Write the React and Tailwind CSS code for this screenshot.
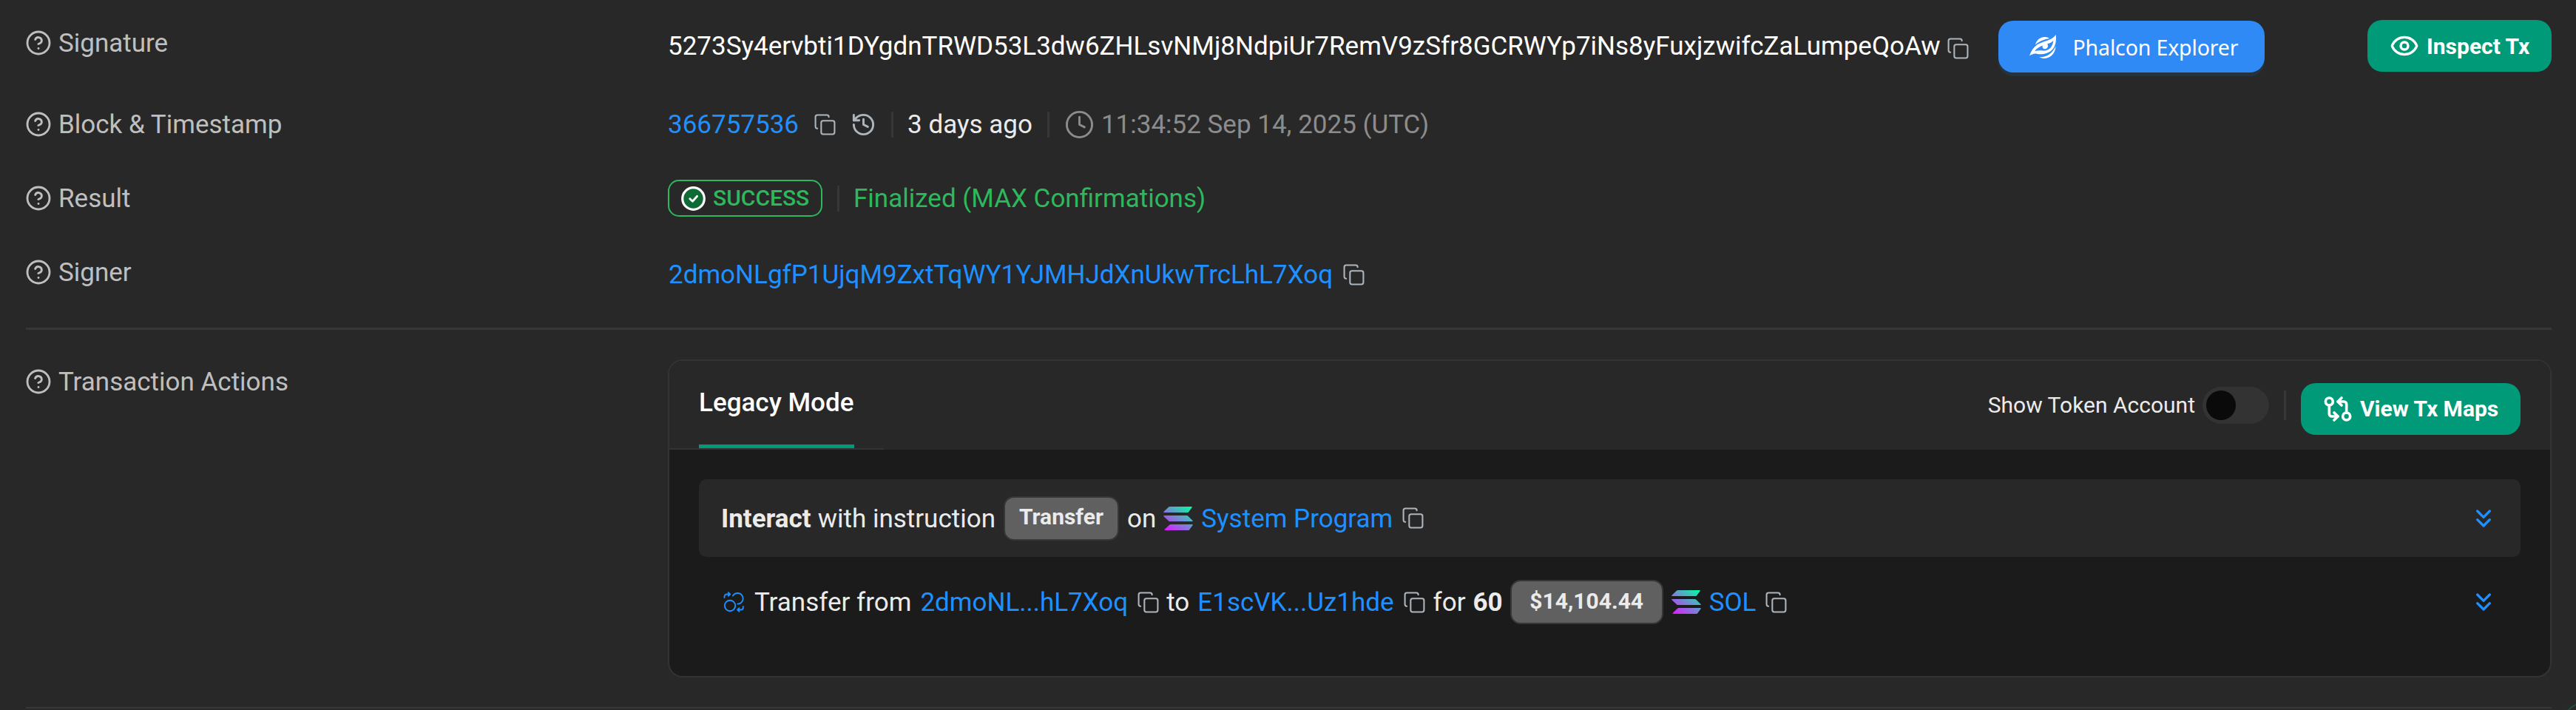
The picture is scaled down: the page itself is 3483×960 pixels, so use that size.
import { Copy, History, Clock, ChevronsDown, Eye, CircleHelp, GitCompareArrows } from "lucide-react";

const SIGNATURE =
  "5273Sy4ervbti1DYgdnTRWD53L3dw6ZHLsvNMj8NdpiUr7RemV9zSfr8GCRWYp7iNs8yFuxjzwifcZaLumpeQoAw";

function Label({ children, className = "" }) {
  return (
    <div className={"flex w-[868px] shrink-0 items-center gap-[9px] text-[#bfbfbf] " + className}>
      <CircleHelp className="-ml-[1px] size-[36px] shrink-0" strokeWidth={1.9} />
      <span className="pt-[2px]">{children}</span>
    </div>
  );
}

function CopyIcon({ className = "" }) {
  return <Copy className={"size-[31px] shrink-0 text-[#adb5bd] " + className} strokeWidth={1.6} />;
}

function Sep({ className = "" }) {
  return <div className={"w-[3px] shrink-0 bg-[#373737] " + className} />;
}

function Link({ children, className = "" }) {
  return <a className={"shrink-0 text-[#1e90ff] " + className}>{children}</a>;
}

function Pill({ children, className }) {
  return (
    <span
      className={
        "flex h-[60px] shrink-0 items-center justify-center rounded-[14px] border-2 border-[#373737] bg-[#606060] pb-[3px] text-[30px] font-bold " +
        className
      }
    >
      {children}
    </span>
  );
}

function SolIcon({ id, className = "" }) {
  return (
    <svg className={"h-[32px] w-[40px] shrink-0 " + className} viewBox="0 0 40 32">
      <defs>
        <linearGradient id={id} gradientUnits="userSpaceOnUse" x1="34" y1="-3" x2="8" y2="34">
          <stop offset="0" stopColor="#00ffa3" />
          <stop offset="1" stopColor="#dc1fff" />
        </linearGradient>
      </defs>
      <g fill={`url(#${id})`}>
        <path d="M7.2.6Q7.8 0 8.6 0H38q1.4 0 .6 1.2L34 7.4q-.6.6-1.4.6H1Q-.4 8 .6 6.8z" />
        <path d="M.6 13.2Q-.4 12 1 12h30.600q.8 0 1.400.6l6.400 6.200q1 1.200-.4 1.200H8.600q-.8 0-1.400-.6z" />
        <path d="M8.400 24.600Q9 24 9.800 24H39q1.400 0 .6 1.200L35 31.400q-.6.6-1.400.6H2.400q-1.400 0-.6-1.200z" />
      </g>
    </svg>
  );
}

function PhalconLogo() {
  return (
    <svg className="h-[32px] w-[36px] shrink-0" viewBox="0 0 36 32" fill="#fff">
      <path d="M8 13.500C9.500 7 15 2.800 21 3c2.600.1 4.600.8 6.200 1.900C20.500 6 13 8.500 8 13.500z" />
      <path
        fillRule="evenodd"
        d="M36 0c.2 9-.6 15.500-5.500 20.500C25 26 16 27 10 25.700 6 25 3 26.500 0 28.600 2.500 21 6.500 15.500 12.500 12.200 20 8.200 29 8.500 36 0zM18.300 14.500c-4.500 1.300-8.300 4-11.300 7.700 4-1.300 7.500-.9 11-.7 5 .3 9.500-1.700 12-6 1.200-2.200 2-4.700 2.400-7.500-2.900 2.500-5.400 3.700-8.400 4.500 1.500 1.200 1.400 4.500-.8 6-2.500 1.500-5.400.2-5.600-2-.1-1 .1-1.500.7-2z"
      />
      <path d="M35.500 15.500c-.2 9-6.500 16-15 16.500-3 .1-5.400-.5-7.300-1.900 9.500.5 17.500-4 22.300-14.600z" />
    </svg>
  );
}

function SwapIcon() {
  return (
    <svg
      className="size-[28px] shrink-0"
      viewBox="0 0 28 28"
      fill="none"
      stroke="#1e90ff"
      strokeWidth="1.900"
      strokeLinecap="round"
      strokeLinejoin="round"
    >
      <circle cx="9" cy="19" r="7.200" />
      <path d="M13 5.600A7.300 7.300 0 1 1 19.300 16.600" />
      <path d="M1.500 8V6.500a3 3 0 0 1 3-3H9M6.800 1.200 9.200 3.500 6.800 5.800" />
      <path d="M26.800 20v1.500a3 3 0 0 1-3 3H19.200M21.500 22.200l-2.300 2.300 2.300 2.300" />
    </svg>
  );
}

function SuccessIcon() {
  return (
    <svg className="size-[33px] shrink-0" viewBox="0 0 33 33" fill="none">
      <circle cx="16.500" cy="16.500" r="14.800" fill="#0f6b35" stroke="#fff" strokeWidth="3.200" />
      <path d="M11.800 16.800l3.600 3.500 6.200-7" stroke="#fff" strokeWidth="2.800" strokeLinecap="round" strokeLinejoin="round" />
    </svg>
  );
}

function Expand() {
  return <ChevronsDown className="ml-auto size-[40px] shrink-0 text-[#1e90ff]" strokeWidth={2} />;
}

export default function App() {
  return (
    <div className="relative flex h-[960px] w-[3483px] flex-col overflow-hidden bg-[#282828] pr-[33px] pl-[35px] font-[Roboto,sans-serif] text-[35px] leading-[50px] whitespace-nowrap text-[#ebebeb]">
      <div className="flex h-[118px] shrink-0 items-start">
        <Label className="h-[115px]">Signature</Label>
        <span className="flex h-[125px] items-center text-white">{SIGNATURE}</span>
        <CopyIcon className="mt-[50px] ml-[8px]" />
        <button className="mt-[28px] ml-[39px] flex h-[70px] w-[360px] items-center rounded-[20px] bg-[#2f8af5] pl-[42px] font-['Noto_Sans',sans-serif] text-[28.500px] text-white shadow-[0_5px_0_#25333f]">
          <PhalconLogo />
          <span className="ml-[23px] pt-[1px] tracking-[-0.150px]">Phalcon Explorer</span>
        </button>
        <button className="mt-[27px] ml-auto flex h-[70px] w-[249px] items-center rounded-[20px] bg-[#009a78] pl-[30px] text-[30px] font-bold text-white">
          <Eye className="size-[40px]" strokeWidth={2} />
          <span className="ml-[10px] pt-[1px]">Inspect Tx</span>
        </button>
      </div>

      <div className="flex h-[100px] shrink-0 items-center">
        <Label>Block &amp; Timestamp</Label>
        <Link className="pt-[2px]">366757536</Link>
        <CopyIcon className="ml-[20px]" />
        <History className="ml-[19px] size-[35px] shrink-0 text-[#adb5bd]" strokeWidth={2} />
        <Sep className="ml-[20px] h-[35px]" />
        <span className="ml-[19px] pt-[2px]">3 days ago</span>
        <Sep className="ml-[20px] h-[35px]" />
        <Clock className="ml-[20px] size-[41px] shrink-0 text-[#8c8c8c]" strokeWidth={1.700} />
        <span className="ml-[9px] pt-[2px] text-[#8c8c8c]">11:34:52 Sep 14, 2025 (UTC)</span>
      </div>

      <div className="flex h-[100px] shrink-0 items-center">
        <Label>Result</Label>
        <div className="flex h-[50px] w-[209px] items-center rounded-[15px] border-2 border-[#2eb85c] pl-[16px] text-[30px] font-medium text-[#2eb85c]">
          <SuccessIcon />
          <span className="ml-[10px]">SUCCESS</span>
        </div>
        <Sep className="ml-[20px] h-[35px]" />
        <span className="ml-[19px] pt-[2px] text-[#2eb85c]">Finalized (MAX Confirmations)</span>
      </div>

      <div className="flex h-[100px] shrink-0 items-center">
        <Label>Signer</Label>
        <div className="flex items-center pt-[6px]">
          <Link className="ml-[1px] pt-[2px]">2dmoNLgfP1UjqM9ZxtTqWY1YJMHJdXnUkwTrcLhL7Xoq</Link>
          <CopyIcon className="ml-[13px]" />
        </div>
      </div>

      <div className="mt-[25px] h-[3px] shrink-0 bg-[#373737]" />

      <div className="mt-[40px] flex shrink-0 items-start">
        <Label className="h-[59px]">Transaction Actions</Label>
        <div className="flex h-[430px] w-[2547px] flex-col overflow-hidden rounded-[20px] border-2 border-[#333333] bg-[#1b1b1b]">
          <div className="flex h-[120px] shrink-0 items-stretch bg-[#282828] pr-[40px]">
            <div className="w-[290px] shrink-0 border-b-2 border-[#333333] px-[40px]">
              <div className="h-full w-[210px] border-b-[5px] border-[#009a78] pt-[32px] text-white">
                <span className="font-medium">Legacy Mode</span>
              </div>
            </div>
            <div className="ml-auto flex items-center">
              <span className="text-[30px]">Show Token Account</span>
              <div className="ml-[10px] flex h-[50px] w-[90px] items-center rounded-full bg-[#333333] pl-[5px]">
                <div className="size-[40px] rounded-full bg-[#0a0a0a]" />
              </div>
              <Sep className="ml-[20px] h-[40px]" />
              <button className="mt-[10px] ml-[20px] flex h-[70px] w-[297px] items-center rounded-[20px] bg-[#009a78] pl-[30px] text-[30px] font-bold text-white">
                <GitCompareArrows className="size-[40px]" strokeWidth={2.200} />
                <span className="ml-[10px]">View Tx Maps</span>
              </button>
            </div>
          </div>

          <div className="px-[40px] pt-[40px]">
            <div className="flex h-[105px] items-center rounded-[10px] bg-[#282828] pr-[30px] pl-[30px]">
              <span className="pt-[2px] font-bold">Interact</span>
              <span className="ml-[9px] pt-[2px]">with instruction</span>
              <Pill className="ml-[11px] w-[156px]">Transfer</Pill>
              <span className="ml-[11px] pt-[2px]">on</span>
              <SolIcon id="sol-program" className="ml-[10px]" />
              <Link className="ml-[11px] pt-[2px]">System Program</Link>
              <CopyIcon className="ml-[12px]" />
              <Expand />
            </div>
            <div className="mt-[8px] flex h-[106px] items-center pr-[30px] pl-[33px]">
              <SwapIcon />
              <span className="ml-[14px] pt-[2px]">Transfer from</span>
              <Link className="ml-[12px] pt-[2px]">2dmoNL...hL7Xoq</Link>
              <CopyIcon className="ml-[12px]" />
              <span className="ml-[9px] pt-[2px]">to</span>
              <Link className="ml-[11px] pt-[2px]">E1scVK...Uz1hde</Link>
              <CopyIcon className="ml-[12px]" />
              <span className="ml-[10px] pt-[2px]">for</span>
              <span className="ml-[10px] pt-[2px] font-bold">60</span>
              <Pill className="ml-[10px] w-[207px]">$14,104.44</Pill>
              <SolIcon id="sol-token" className="ml-[11px]" />
              <Link className="ml-[11px] pt-[2px]">SOL</Link>
              <CopyIcon className="ml-[12px]" />
              <Expand />
            </div>
          </div>
        </div>
      </div>

      <div className="mt-[40px] h-[2px] shrink-0 bg-[#373737]" />

      <div className="absolute top-[945px] left-[3454px] size-[110px] rounded-full border-2 border-[#1f4a40]" />
    </div>
  );
}
